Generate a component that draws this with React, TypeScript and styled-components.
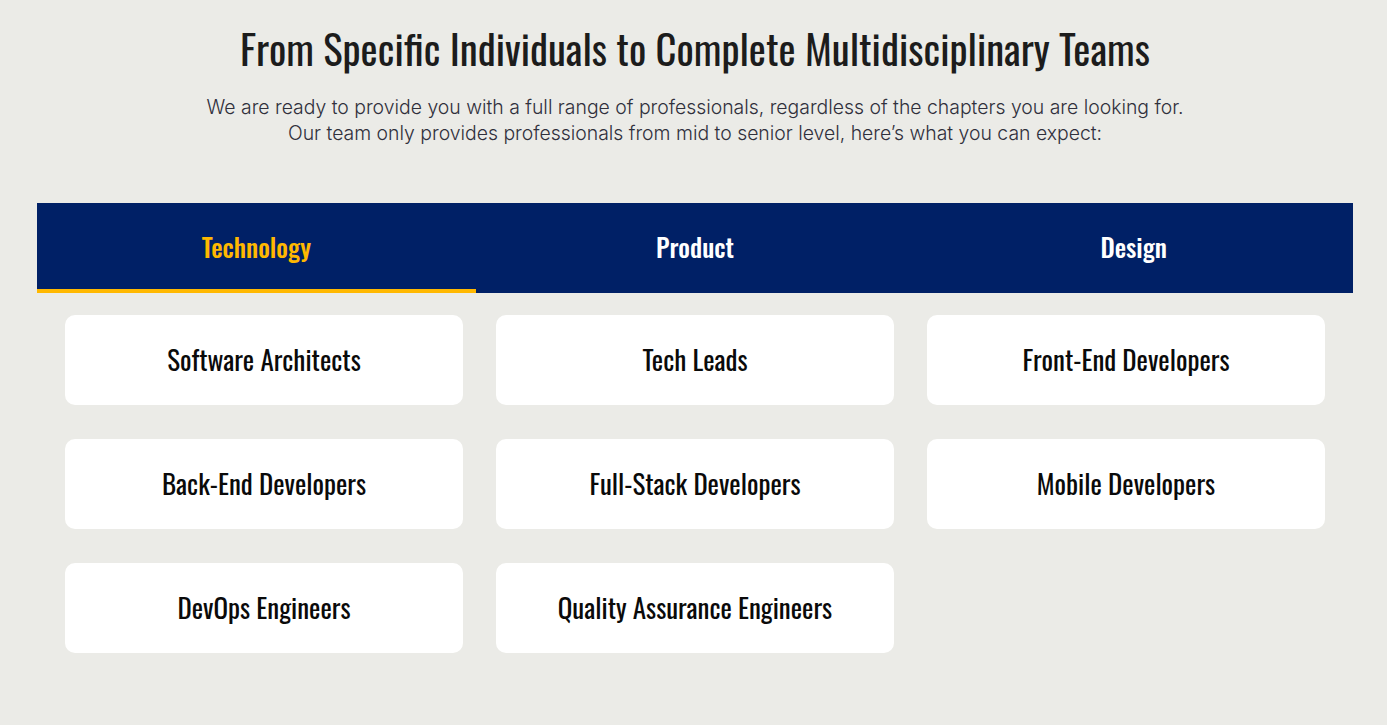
import React from "react";
import styled, { createGlobalStyle } from "styled-components";

const Global = createGlobalStyle`
  html, body { margin: 0; padding: 0; background: #EBEBE7; }
  * { box-sizing: border-box; }
`;

const display = `"Oswald", "DejaVu Sans Condensed", "Liberation Sans", sans-serif`;

const Page = styled.div`
  width: 1387px;
  min-height: 725px;
  background: #EBEBE7;
  padding: 22px 34px 0 37px;
`;

const Header = styled.header`
  display: flex;
  flex-direction: column;
  align-items: center;
  text-align: center;
`;

const Title = styled.h1`
  margin: 0;
  font-family: ${display};
  font-weight: 400;
  font-size: 40.7px;
  line-height: 52px;
  color: #1c1c1c;
  white-space: nowrap;
`;

const Subtitle = styled.p`
  margin: 20px 0 0;
  font-family: Inter, "Noto Sans", sans-serif;
  font-weight: 300;
  font-size: 19.4px;
  line-height: 26px;
  color: #30303c;
`;

const Tabs = styled.nav`
  margin-top: 57px;
  display: grid;
  grid-template-columns: repeat(3, 1fr);
  height: 90px;
  background: #002066;
`;

const Tab = styled.div<{ $active?: boolean }>`
  display: flex;
  align-items: center;
  justify-content: center;
  font-family: ${display};
  font-weight: 500;
  font-size: 25.6px;
  color: ${(p) => (p.$active ? "#FFB800" : "#ffffff")};
  border-bottom: 4px solid ${(p) => (p.$active ? "#FFB800" : "transparent")};
`;

const Grid = styled.div`
  display: grid;
  grid-template-columns: repeat(3, 1fr);
  column-gap: 33px;
  row-gap: 34px;
  padding: 22px 28px 0;
`;

const Card = styled.div`
  height: 90px;
  background: #ffffff;
  border-radius: 10px;
  display: flex;
  align-items: center;
  justify-content: center;
  padding-bottom: 3px;
  font-family: ${display};
  font-weight: 400;
  font-size: 27px;
  color: #0a0a0a;
`;

const roles = [
  "Software Architects",
  "Tech Leads",
  "Front-End Developers",
  "Back-End Developers",
  "Full-Stack Developers",
  "Mobile Developers",
  "DevOps Engineers",
  "Quality Assurance Engineers",
];

export default function App() {
  return (
    <>
      <Global />
      <Page>
        <Header>
          <Title>From Specific Individuals to Complete Multidisciplinary Teams</Title>
          <Subtitle>
            We are ready to provide you with a full range of professionals, regardless of the chapters you are looking for.
            <br />
            Our team only provides professionals from mid to senior level, here’s what you can expect:
          </Subtitle>
        </Header>
        <Tabs>
          <Tab $active>Technology</Tab>
          <Tab>Product</Tab>
          <Tab>Design</Tab>
        </Tabs>
        <Grid>
          {roles.map((r) => (
            <Card key={r}>{r}</Card>
          ))}
        </Grid>
      </Page>
    </>
  );
}
